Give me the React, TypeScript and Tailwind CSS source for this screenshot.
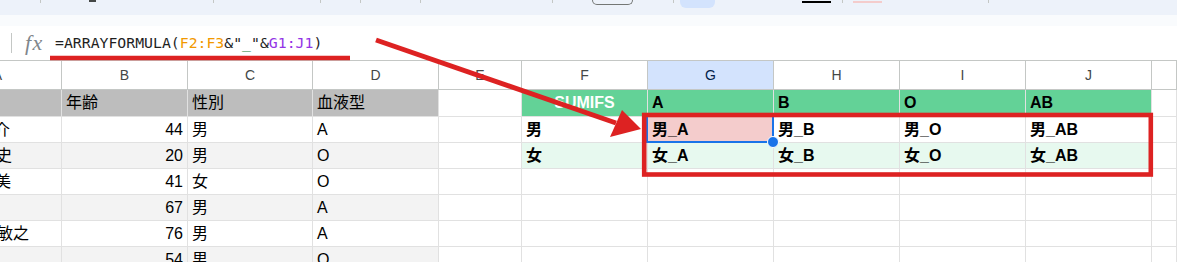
import React from "react";

type Cell = {
  text?: string;
  cls?: string;
  inner?: string;
  selected?: boolean;
};

const cols = [
  { key: "A", w: "w-[62px]" },
  { key: "B", w: "w-[126px]" },
  { key: "C", w: "w-[125px]" },
  { key: "D", w: "w-[126px]" },
  { key: "E", w: "w-[83px]" },
  { key: "F", w: "w-[126px]" },
  { key: "G", w: "w-[126px]" },
  { key: "H", w: "w-[126px]" },
  { key: "I", w: "w-[126px]" },
  { key: "J", w: "w-[126px]" },
  { key: "K", w: "w-[25px]" },
];

const GRAY_HEAD = "bg-[#bdbdbd] border-[#bdbdbd]";
const GREEN_HEAD = "bg-[#63d297] border-[#63d297] font-bold";
const GRAY_BAND = "bg-[#f3f3f3]";
const GREEN_BAND = "bg-[#e7f9ef] font-bold";

// rows of the sheet, columns A..K (column A is cut off at the left edge)
const rows: { h: string; cells: Cell[] }[] = [
  {
    h: "h-[27px]",
    cells: [
      { cls: GRAY_HEAD },
      { text: "年齢", cls: GRAY_HEAD },
      { text: "性別", cls: GRAY_HEAD },
      { text: "血液型", cls: GRAY_HEAD },
      {},
      { text: "SUMIFS", cls: `${GREEN_HEAD} text-white justify-center` },
      { text: "A", cls: GREEN_HEAD },
      { text: "B", cls: GREEN_HEAD },
      { text: "O", cls: GREEN_HEAD },
      { text: "AB", cls: GREEN_HEAD },
      {},
    ],
  },
  {
    h: "h-[26px]",
    cells: [
      { text: "健介", inner: "ml-[-26px]" },
      { text: "44", cls: "justify-end" },
      { text: "男" },
      { text: "A" },
      {},
      { text: "男", cls: "font-bold" },
      { text: "男_A", cls: "font-bold bg-[#f4cccc]", selected: true },
      { text: "男_B", cls: "font-bold" },
      { text: "男_O", cls: "font-bold" },
      { text: "男_AB", cls: "font-bold" },
      {},
    ],
  },
  {
    h: "h-[26px]",
    cells: [
      { text: "篤史", cls: GRAY_BAND, inner: "ml-[-24px]" },
      { text: "20", cls: `${GRAY_BAND} justify-end` },
      { text: "男", cls: GRAY_BAND },
      { text: "O", cls: GRAY_BAND },
      {},
      { text: "女", cls: GREEN_BAND },
      { text: "女_A", cls: GREEN_BAND },
      { text: "女_B", cls: GREEN_BAND },
      { text: "女_O", cls: GREEN_BAND },
      { text: "女_AB", cls: GREEN_BAND },
      {},
    ],
  },
  {
    h: "h-[26px]",
    cells: [
      { text: "由美", inner: "ml-[-25px]" },
      { text: "41", cls: "justify-end" },
      { text: "女" },
      { text: "O" },
      {}, {}, {}, {}, {}, {}, {},
    ],
  },
  {
    h: "h-[26px]",
    cells: [
      { cls: GRAY_BAND },
      { text: "67", cls: `${GRAY_BAND} justify-end` },
      { text: "男", cls: GRAY_BAND },
      { text: "A", cls: GRAY_BAND },
      {}, {}, {}, {}, {}, {}, {},
    ],
  },
  {
    h: "h-[26px]",
    cells: [
      { text: "佐藤敏之", inner: "ml-[-39px]" },
      { text: "76", cls: "justify-end" },
      { text: "男" },
      { text: "A" },
      {}, {}, {}, {}, {}, {}, {},
    ],
  },
  {
    h: "h-[26px]",
    cells: [
      { cls: GRAY_BAND },
      { text: "54", cls: `${GRAY_BAND} justify-end` },
      { text: "男", cls: GRAY_BAND },
      { text: "O", cls: GRAY_BAND },
      {}, {}, {}, {}, {}, {}, {},
    ],
  },
];

const Toolbar = () => (
  <div className="h-[15px] bg-[#edf2fa] flex items-start">
    <div className="ml-[40px] w-px h-[3px] bg-[#c4c7c5]" />
    <div className="ml-[48px] w-[7px] h-[2px] bg-[#444746]" />
    <div className="ml-[117px] w-px h-[3px] bg-[#c4c7c5]" />
    <div className="ml-[106px] w-px h-[3px] bg-[#c4c7c5]" />
    <div className="ml-[39px] w-px h-[3px] bg-[#c4c7c5]" />
    <div className="ml-[59px] w-px h-[3px] bg-[#c4c7c5]" />
    <div className="ml-[131px] w-px h-[3px] bg-[#c4c7c5]" />
    <div className="ml-[39px] w-[41px] h-[5px] border border-t-0 border-[#747775] rounded-b-[5px]" />
    <div className="ml-[40px] w-px h-[3px] bg-[#c4c7c5]" />
    <div className="ml-[6px] w-[35px] h-[8px] bg-[#d3e3fd] rounded-b-[6px]" />
    <div className="ml-[87px] mt-[1px] w-[29px] h-[2px] bg-black" />
    <div className="ml-[11px] w-px h-[3px] bg-[#c4c7c5]" />
    <div className="ml-[10px] mt-[1px] w-[29px] h-[2px] bg-[#f4cccc]" />
    <div className="ml-[106px] w-px h-[3px] bg-[#c4c7c5]" />
  </div>
);

const FormulaBar = () => (
  <div className="h-[34px] bg-white flex items-center">
    <div className="ml-[11px] w-px h-[20px] bg-[#c4c7c5]" />
    <span className="ml-[13px] w-[22px] font-['Liberation_Serif',serif] italic text-[22px] leading-none text-[#80868b] tracking-[1.5px]">
      fx
    </span>
    <span className="ml-[8px] font-['DejaVu_Sans_Mono',monospace] text-[14.8px] text-[#1f1f1f] whitespace-pre">
      =ARRAYFORMULA(<span className="text-[#f29900]">F2:F3</span>&"
      <span className="text-[#188038]">_</span>"&
      <span className="text-[#9334e6]">G1:J1</span>)
    </span>
  </div>
);

const ColumnHeader = () => (
  <div className="h-[30px] flex border-t border-b border-[#c4c7c5] text-[14px] text-[#444746]">
    {cols.map((c) => (
      <div
        key={c.key}
        className={`${c.w} shrink-0 h-full flex items-center justify-center border-r border-[#c4c7c5] overflow-hidden ${
          c.key === "G" ? "bg-[#d3e3fd] text-[#041e49]" : "bg-white"
        }`}
      >
        {c.key === "A" ? <span className="ml-[-66px]">A</span> : c.key === "K" ? "" : c.key}
      </div>
    ))}
  </div>
);

const Annotations = () => (
  <svg className="absolute inset-0 pointer-events-none z-20" width={1177} height={262}>
    <line x1={50} y1={58} x2={350} y2={58} stroke="#dd2222" strokeWidth={4.5} />
    <line x1={376} y1={40} x2={616} y2={123} stroke="#dd2222" strokeWidth={5} />
    <polygon points="641,129 622,110 610,137" fill="#dd2222" />
    <rect x={644.2} y={115} width={506.6} height={59.5} fill="none" stroke="#dd2222" strokeWidth={4.6} />
  </svg>
);

export default function App() {
  return (
    <div className="relative w-[1177px] h-[262px] overflow-hidden bg-white font-['Liberation_Sans','Noto_Sans_CJK_JP',sans-serif]">
      <Toolbar />
      <div className="h-[11px] bg-[#f9fbfd]" />
      <FormulaBar />
      <ColumnHeader />
      {rows.map((r, ri) => (
        <div key={ri} className={`${r.h} flex border-b border-[#e1e1e1] text-[16px] leading-[18px] text-black`}>
          {cols.map((c, ci) => {
            const cell = r.cells[ci] || {};
            return (
              <div
                key={c.key}
                className={`${c.w} shrink-0 h-full flex items-center px-[4px] border-r border-[#e1e1e1] whitespace-nowrap relative ${
                  c.key === "A" ? "px-0 overflow-hidden" : ""
                } ${cell.cls || ""}`}
              >
                {cell.text && <span className={cell.inner || ""}>{cell.text}</span>}
                {cell.selected && (
                  <>
                    <div className="absolute left-[-2px] top-[-2px] w-[128px] h-[28px] border-2 border-[#1a73e8] z-10" />
                    <div className="absolute left-[119px] top-[19px] w-[12px] h-[12px] rounded-full bg-[#1a73e8] border-[1.5px] border-white z-10" />
                  </>
                )}
              </div>
            );
          })}
        </div>
      ))}
      <Annotations />
    </div>
  );
}
